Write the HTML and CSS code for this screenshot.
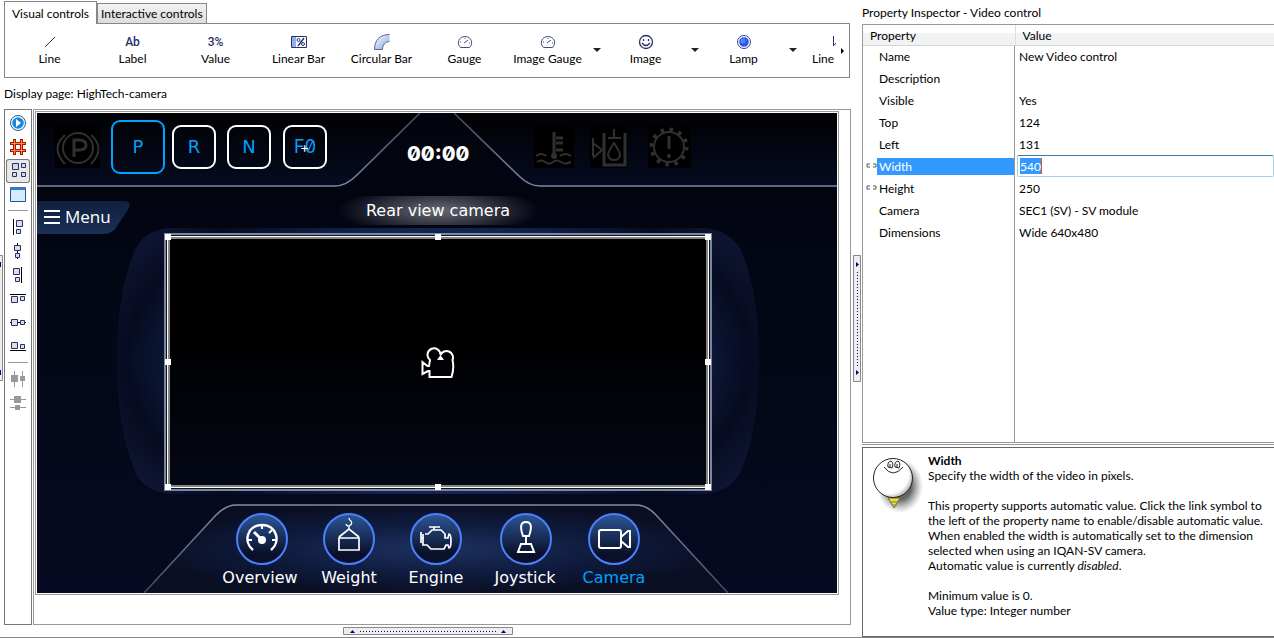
FILE: index.html
```html
<!DOCTYPE html>
<html lang="en">
<head>
<meta charset="utf-8">
<title>Display page editor</title>
<link rel="stylesheet" href="styles.css">
</head>
<body>
<div class="app">
  <main class="editor">
    <div class="tabs" role="tablist">
      <button class="tab tab-active" role="tab" aria-selected="true">Visual controls</button>
      <button class="tab" role="tab" aria-selected="false">Interactive controls</button>
    </div>
    <div class="palette">
      <button class="tool"><svg class="tool-icon" viewBox="0 0 16 16"><path d="M3 13 13 3" stroke="#26306b"/></svg>Line</button>
      <button class="tool"><span class="tool-glyph">Ab</span>Label</button>
      <button class="tool"><span class="tool-glyph">3%</span>Value</button>
      <button class="tool"><svg class="tool-icon" viewBox="0 0 16 16"><path d="M.5 2.500h15v11H.5z" fill="#fff" stroke="#26306b"/><path d="M1 3h4v10H1z" fill="#8fb0e6"/><path d="m7 12 6-8" stroke="#26306b" stroke-width="1.400"/><circle cx="7.500" cy="6" r="1.500" stroke="#26306b" fill="none"/><circle cx="12" cy="10" r="1.500" stroke="#26306b" fill="none"/></svg>Linear Bar</button>
      <button class="tool"><svg class="tool-icon" viewBox="0 0 16 16"><defs><linearGradient id="arc" x2="1" y2="1"><stop stop-color="#fff"/><stop offset="1" stop-color="#7fa5df"/></linearGradient></defs><path d="M.5 15.500C.5 6 6 .5 15.500.5V7C11 8 8.500 11 8.500 15.500z" fill="url(#arc)"/><path d="M.5 15.500C.5 6 6 .5 15.500.5M8.500 15.500C8.500 11 11 8 15.500 7.500M.5 15.500h8" fill="none" stroke="#5b6595"/></svg>Circular Bar</button>
      <button class="tool"><svg class="tool-icon" viewBox="0 0 16 16"><path d="M3.500 13.500C-1 9 2 2.500 8 2.500s9 6.500 4.500 11zM7 9l4-3M3 8h1M8 4v1M12 9h1" fill="none" stroke="#454d7c"/></svg>Gauge</button>
      <button class="tool"><svg class="tool-icon" viewBox="0 0 16 16"><path d="M3.500 13.500C-1 9 2 2.500 8 2.500s9 6.500 4.500 11zM7 9l4-3M3 8h1M8 4v1M12 9h1" fill="none" stroke="#454d7c"/></svg>Image Gauge</button>
      <button class="drop" aria-label="Image gauge options"></button>
      <button class="tool"><svg class="tool-icon" viewBox="0 0 16 16"><circle cx="8" cy="8" r="6.500" fill="none" stroke="#26306b" stroke-width="1.300"/><path d="M5.500 5v2M10.500 5v2M4 9q4 5 8 0" fill="none" stroke="#26306b" stroke-width="1.300"/></svg>Image</button>
      <button class="drop" aria-label="Image options"></button>
      <button class="tool"><svg class="tool-icon" viewBox="0 0 16 16"><circle cx="8" cy="8" r="6.500" fill="#fff" stroke="#3a437b"/><circle cx="8" cy="8" r="4.800" fill="#2f52f5"/><circle cx="7" cy="7" r="2.500" fill="#4b8cf8"/></svg>Lamp</button>
      <button class="drop" aria-label="Lamp options"></button>
      <button class="tool tool-cut"><svg class="tool-icon" viewBox="0 0 16 16"><path d="M1.500 2v10M2 11.500 4 9" fill="none" stroke="#26306b"/></svg>Line</button>
      <button class="scroll-next" aria-label="More controls"></button>
    </div>
    <h1 class="page-name">Display page: HighTech-camera</h1>

    <div class="workspace">
      <svg class="side-handle" viewBox="0 0 3 126" aria-hidden="true"><path d="M-1 .5h3.500v125H-1z" fill="#eee" stroke="#888"/><path d="M0 7h1v5H0zM0 115h1v5H0z" fill="#000080"/></svg>
      <div class="strip" role="toolbar" aria-label="Layout">
        <button class="strip-btn" aria-label="Run"><svg viewBox="0 0 24 24"><circle cx="12" cy="12" r="7.500" fill="#fff" stroke="#175da9"/><circle cx="12" cy="12" r="5.800" fill="#1e86dc"/><path d="m10 8 5 4-5 4z" fill="#fff"/></svg></button>
        <button class="strip-btn" aria-label="Grid"><svg viewBox="0 0 24 24"><path d="M8.500 4v16M15.500 4v16M4 8.500h16M4 15.500h16" stroke="#b01208" stroke-width="3"/><path d="M8.500 5v14M15.500 5v14M5 8.500h14M5 15.500h14" stroke="#ff8f3c"/></svg></button>
        <button class="strip-btn pressed" aria-label="Snap to objects" aria-pressed="true"><svg viewBox="0 0 24 24"><g fill="#d9dae0" stroke="#26306b"><path d="M6.500 4.500h6v6h-6zM15.500 4.500h4v4h-4zM6.500 13.500h4v4h-4zM15.500 13.500h4v4h-4z"/></g></svg></button>
        <button class="strip-btn" aria-label="Page"><svg viewBox="0 0 24 24"><path d="M4.500 5.500h15v13h-15z" fill="#d5ebff" stroke="#2251a5"/><path d="M4 4h16v3H4z" fill="#2d78d6"/><path d="M16 5h2v1h-2z" fill="#f03050"/></svg></button>
        <hr class="strip-sep">
        <button class="strip-btn" aria-label="Align left"><svg viewBox="0 0 24 24"><path d="M7.500 4v16" stroke="#000"/><path d="M10.500 5.500h6v6h-6zM10.500 14.500h4v4h-4z" fill="#dddee3" stroke="#26306b"/></svg></button>
        <button class="strip-btn" aria-label="Align centre"><svg viewBox="0 0 24 24"><path d="M11.500 4v16" stroke="#000"/><path d="M8.500 6.500h6v5h-6zM9.500 14.500h4v4h-4z" fill="#dddee3" stroke="#26306b"/></svg></button>
        <button class="strip-btn" aria-label="Align right"><svg viewBox="0 0 24 24"><path d="M15.500 4v16" stroke="#000"/><path d="M7.500 5.500h6v6h-6zM9.500 14.500h4v4h-4z" fill="#dddee3" stroke="#26306b"/></svg></button>
        <button class="strip-btn" aria-label="Align top"><svg viewBox="0 0 24 24"><path d="M4 7.500h16" stroke="#000"/><path d="M5.500 9.500h6v6h-6zM14.500 9.500h4v4h-4z" fill="#dddee3" stroke="#26306b"/></svg></button>
        <button class="strip-btn" aria-label="Align middle"><svg viewBox="0 0 24 24"><path d="M4 11.500h16" stroke="#000"/><path d="M5.500 8.500h6v6h-6zM14.500 9.500h4v4h-4z" fill="#dddee3" stroke="#26306b"/></svg></button>
        <button class="strip-btn" aria-label="Align bottom"><svg viewBox="0 0 24 24"><path d="M4 15.500h16" stroke="#000"/><path d="M5.500 7.500h6v6h-6zM14.500 9.500h4v4h-4z" fill="#dddee3" stroke="#26306b"/></svg></button>
        <hr class="strip-sep">
        <button class="strip-btn" aria-label="Distribute horizontally" disabled><svg viewBox="0 0 24 24"><path d="M8.500 4v16M16.500 4v16" stroke="#999"/><path d="M5 8h7v7H5zM14 9h5v5h-5z" fill="#999"/></svg></button>
        <button class="strip-btn" aria-label="Distribute vertically" disabled><svg viewBox="0 0 24 24"><path d="M4 8.500h16M4 16.500h16" stroke="#999"/><path d="M8 5h7v7H8zM9 14h5v5H9z" fill="#999"/></svg></button>
      </div>

      <div class="viewport">
        <div class="display">
          <svg class="backdrop" viewBox="0 0 800 480" aria-hidden="true">
            <defs>
              <linearGradient id="base" x2="0" y2="1"><stop stop-color="#02040d"/><stop offset=".5" stop-color="#030817"/><stop offset="1" stop-color="#060a22"/></linearGradient>
              <linearGradient id="bar" x2="0" y2="1"><stop stop-color="#010103"/><stop offset="1" stop-color="#050b20"/></linearGradient>
              <linearGradient id="edge" x2="0" y2="1"><stop stop-color="#44465a"/><stop offset="1" stop-color="#80869f"/></linearGradient>
              <linearGradient id="edge2" x2="0" y2="1"><stop stop-color="#858ba2"/><stop offset="1" stop-color="#444a5e"/></linearGradient>
              <radialGradient id="barrel" gradientUnits="userSpaceOnUse" cx="0" cy="0" r="1" gradientTransform="translate(401 248) scale(380 220)"><stop offset=".6" stop-color="#122550"/><stop offset=".72" stop-color="#0b1635"/><stop offset=".82" stop-color="#060b20"/><stop offset=".86" stop-color="#0a0f27"/><stop offset="1" stop-color="#121837"/></radialGradient>
              <radialGradient id="dock" cx=".5" cy=".5" r=".5"><stop stop-color="#1d315f"/><stop offset=".6" stop-color="#0e1a3c"/><stop offset="1" stop-color="#0b0f24"/></radialGradient>
              <linearGradient id="menu" x2="0" y2="1"><stop stop-color="#10203f"/><stop offset="1" stop-color="#1b3056"/></linearGradient>
              <linearGradient id="disc" x2="0" y2="1"><stop stop-color="#2d5798"/><stop offset=".8" stop-color="#0a1029"/></linearGradient>
            </defs>
            <path fill="url(#base)" d="M0 0h800v480H0z"/>
            <path fill="url(#bar)" d="M0 0h383L320 62Q309 73 298 73H0zM417 0l65 63q10 10 21 10h297V0z"/>
            <path fill="none" stroke="url(#edge)" stroke-width="1.600" d="M0 73h298q11 0 22-11L383 0M417 0l65 63q10 10 21 10h297"/>
            <path fill="url(#menu)" d="M0 88h87q8 0 5 7L80 113q-4 8-14 8H0z"/>
            <path fill="url(#barrel)" d="M132 115H668Q692 117 704 137Q722 180 722 247T704 358Q694 378 668 381H132Q106 378 98 358Q80 316 80 247T98 137Q108 117 132 115z"/>
            <path fill="url(#dock)" d="M107 480l72-78q10-10 20-10h400q11 0 20 10l72 78z"/>
            <path fill="none" stroke="url(#edge2)" stroke-width="1.500" d="M107 480l72-78q10-10 20-10h400q11 0 20 10l72 78"/>
            <path fill="#000" d="M18 13h45v42H18zM497 13h40v42h-40zM553 13h37v42h-37zM611 13h43v42h-43z"/>
            <g fill="none" stroke="#303030" stroke-width="2">
              <circle cx="41" cy="35" r="15"/><path d="M37 44V27h5q7 0 7 5t-7 5h-5" stroke-width="3"/><path d="M28 22q-15 13 0 29M54 22q15 13 0 29"/>
              <path d="M517 19v22M519 25h7M519 30h7M519 37h7" stroke-width="3"/><circle cx="517" cy="43" r="3" fill="#303030" stroke="none"/><path d="M499 43q5-4 10 0M523 43q5-4 11 0M500 49q4-3 8 0t8 0 8 0 10 0"/>
              <path d="M567 20v32h21V20" stroke-width="3"/><path d="M577 16v8M571 25h13"/><path d="M577 30q-6 9-6 12 1 5 6 5t6-5q0-3-6-12zM556 25v18M556 30l9 7-9 8"/>
              <circle cx="632" cy="34" r="15"/><circle cx="632" cy="34" r="17.500" stroke-width="4" stroke-dasharray="3.500 5.663"/><path d="M632 23v13" stroke-width="3"/><circle cx="632" cy="43" r="2" fill="#303030" stroke="none"/>
            </g>
            <path d="M7 98h16M7 104h16M7 110h16" stroke="#fff" stroke-width="2"/>
            <g fill="url(#disc)" stroke="#4b80ff" stroke-width="2"><circle cx="225" cy="426" r="25"/><circle cx="312" cy="426" r="25"/><circle cx="399" cy="426" r="25"/><circle cx="489" cy="426" r="25"/><circle cx="577" cy="426" r="25"/></g>
            <g fill="none" stroke="#fff" stroke-width="2">
              <path d="M216 437C206 429 210 412 225 412s19 17 9 25" stroke-width="2.500"/><path d="M217 419l8 8" stroke-width="3"/><circle cx="225" cy="427" r="4" fill="#fff" stroke="none"/><path d="M211 427h4M235 427h4M225 412v4M235 417l-3 3"/>
              <path d="M302 425h20v12h-20zM302 424l10-8 10 8" stroke-width="1.700"/><path d="M312 416v-3q4-2 2-5-2-1-2-3M309 411q1 3 4 2" stroke-width="1.300"/>
              <path d="M388 421h3l4-4h9l4 4v4h3l1-4q2 0 2 7t-2 7l-1-3h-2l-2 4h-13l-4-4h-4v-11M384 419v11M384 425h3M392 414h11M397 414v3" stroke-width="1.700"/>
              <path d="M486 423q-5-14 3-14t3 14zM489 423v9M484 431h10l3 8h-16z"/>
              <rect x="562" y="417" width="22" height="18" rx="2"/><path d="M584 424l7-6h2v16h-2l-7-6"/>
            </g>
          </svg>
          <span class="gear gear-p">P</span>
          <span class="gear gear-r">R</span>
          <span class="gear gear-n">N</span>
          <span class="gear gear-f">F0<i class="plus">+</i></span>
          <span class="clock">00:00</span>
          <span class="menu-label">Menu</span>
          <span class="title">Rear view camera</span>
          <div class="video">
            <svg class="video-icon" viewBox="0 0 34 34"><path d="M8 20H6.500L1.500 16v12L7 25h1.500v6h22q3-9 1-17A6.500 6.500 0 1 0 19.500 9A6.500 6.500 0 1 0 9 14z" fill="none" stroke="#fff" stroke-width="2"/><path d="M16 14h7l-3.500-5z" fill="#fff"/></svg>
            <i class="grip n w"></i><i class="grip n c"></i><i class="grip n e"></i>
            <i class="grip m w"></i><i class="grip m e"></i>
            <i class="grip s w"></i><i class="grip s c"></i><i class="grip s e"></i>
          </div>
          <span class="nav nav-overview">Overview</span>
          <span class="nav nav-weight">Weight</span>
          <span class="nav nav-engine">Engine</span>
          <span class="nav nav-joystick">Joystick</span>
          <span class="nav nav-camera">Camera</span>
        </div>
      </div>
    </div>
    <div class="splitter-h"><svg class="handle-h" viewBox="0 0 170 8"><path d="M.5.5h169v7H.5z" fill="#eee" stroke="#888"/><path d="M7 6l2.500-3L12 6zM158 6l2.500-3L163 6z" fill="#000080"/><path d="M17 4.500h137" stroke="#000080" stroke-dasharray="1 2"/></svg></div>
  </main>

  <div class="splitter-v"><svg class="handle-v" viewBox="0 0 8 127"><path d="M.5.5h7v126h-7z" fill="#eee" stroke="#888"/><path d="M3 7l3 2.500L3 12zM3 115l3 2.500L3 120z" fill="#000080"/><path d="M4.500 17v95" stroke="#000080" stroke-dasharray="1 2"/></svg></div>

  <aside class="inspector">
    <h2 class="inspector-title">Property Inspector - Video control</h2>
    <div class="grid-pane">
      <table class="props">
        <thead><tr><th class="col-name" scope="col">Property</th><th scope="col">Value</th></tr></thead>
        <tbody>
          <tr><td><span class="prop">Name</span></td><td>New Video control</td></tr>
          <tr><td><span class="prop">Description</span></td><td></td></tr>
          <tr><td><span class="prop">Visible</span></td><td>Yes</td></tr>
          <tr><td><span class="prop">Top</span></td><td>124</td></tr>
          <tr><td><span class="prop">Left</span></td><td>131</td></tr>
          <tr><td class="linked"><svg class="link" viewBox="0 0 11 6"><path d="M4 1H1v3h3M7 1h3v3H7" fill="none" stroke="#555"/></svg><label class="prop prop-on" for="width">Width</label></td><td class="edit"><div class="field"><input id="width" class="field-input" value="540"></div></td></tr>
          <tr><td class="linked"><svg class="link" viewBox="0 0 11 6"><path d="M4 1H1v3h3M7 1h3v3H7" fill="none" stroke="#555"/></svg><span class="prop">Height</span></td><td>250</td></tr>
          <tr><td><span class="prop">Camera</span></td><td>SEC1 (SV) - SV module</td></tr>
          <tr><td><span class="prop">Dimensions</span></td><td>Wide 640x480</td></tr>
        </tbody>
      </table>
    </div>
    <div class="help-area">
      <div class="help">
        <svg class="mascot" viewBox="0 0 50 60"><defs><radialGradient id="shade"><stop offset=".5" stop-color="#555" stop-opacity=".9"/><stop offset="1" stop-color="#888" stop-opacity="0"/></radialGradient><radialGradient id="ball" cx=".4" cy=".4" r=".62"><stop offset=".8" stop-color="#fff"/><stop offset="1" stop-color="#bbb"/></radialGradient></defs><ellipse cx="27" cy="29" rx="23" ry="27" fill="url(#shade)"/><path d="M15 41h12l-6 10z" fill="#e9df28" stroke="#776e20"/><path d="M17 45h9M19 48h5" stroke="#7777aa"/><circle cx="20" cy="21" r="19.500" fill="url(#ball)" stroke="#222"/><path d="M11 10q9 12 19 0M15 10q-1-5 3-6 3 2 1 7zM22 10q-1-5 3-6 3 2 1 7zM17 7v3M24 7v3" fill="none" stroke="#222"/></svg>
        <div class="help-text">
          <h3 class="help-title">Width</h3>
          <p>Specify the width of the video in pixels.</p>
          <p class="gap">This property supports automatic value. Click the link symbol to the left of the property name to enable/disable automatic value. When enabled the width is automatically set to the dimension selected when using an IQAN-SV camera.</p>
          <p>Automatic value is currently <em>disabled</em>.</p>
          <p class="gap">Minimum value is 0.</p>
          <p>Value type: Integer number</p>
        </div>
      </div>
    </div>
  </aside>
</div>
</body>
</html>
```
FILE: styles.css
```css
* { box-sizing: border-box; }
body {
  margin: 0;
  background: #fff;
  color: #000;
  font: 12px/15px Lato, "Open Sans", sans-serif;
}
h1, h2, h3, p { margin: 0; font-size: inherit; font-weight: normal; }
button { font: inherit; color: inherit; background: none; border: 0; padding: 0; }

.app {
  display: grid;
  grid-template-columns: minmax(0, 1fr) 11px 412px;
  height: 100vh;
  border-bottom: 1px solid #888;
}
.editor { display: flex; flex-direction: column; min-height: 0; }

/* control palette */
.tabs { display: flex; align-items: flex-end; padding: 1px 0 0 4px; height: 23px; }
.tab {
  height: 20px;
  padding: 0 3px;
  border: 1px solid #85858d;
  border-bottom: 0;
  background: linear-gradient(#f2f2f2, #dcdcdc);
  white-space: nowrap;
}
.tab-active {
  height: 23px;
  margin-bottom: -1px;
  padding: 0 7px;
  background: #fff;
  position: relative;
  z-index: 1;
}
.palette {
  display: flex;
  height: 55px;
  margin: 0 1px 0 4px;
  padding: 0 3px;
  border: 1px solid #85858d;
}
.tool {
  display: flex;
  flex-direction: column;
  align-items: center;
  flex: 0 0 83px;
  padding-top: 10px;
  white-space: nowrap;
}
.tool-icon { display: block; width: 16px; height: 16px; margin-bottom: 1px; }
.tool-glyph { height: 17px; line-height: 16px; font-family: Roboto, sans-serif; font-weight: 500; color: #26306b; }
.drop { flex: 0 0 15px; position: relative; }
.drop::after {
  content: "";
  position: absolute;
  top: 24px;
  left: 4px;
  border: 4px solid transparent;
  border-top-color: #222;
}
.tool-cut { flex: 0 0 24px; margin-left: 12px; overflow: hidden; align-items: flex-start; }
.tool-cut .tool-icon { margin-left: 20px; }
.scroll-next { margin-left: auto; width: 8px; position: relative; }
.scroll-next::after {
  content: "";
  position: absolute;
  top: 24px;
  left: 3px;
  border: 3px solid transparent;
  border-left-color: #000;
}
.page-name { padding: 8px 4px; }

/* workspace */
.workspace { display: flex; flex: 1; min-height: 0; }
.side-handle {
  flex: none;
  width: 3px;
  height: 126px;
  margin: 146px 1px 0 0;
}
.strip {
  width: 28px;
  flex: none;
  padding: 1px;
  border: 1px solid #777;
}
.strip-btn { display: block; width: 24px; height: 24px; }
.strip-btn svg { display: block; width: 24px; height: 24px; }
.pressed { border-radius: 3px; background: #e8e8e8; box-shadow: inset 0 0 0 1px #777; }
.strip-sep { height: 1px; margin: 3px 2px 4px; border: 0; background: #999; }
.viewport {
  flex: 1;
  min-width: 0;
  margin-left: 1px;
  padding: 1px;
  border: 1px solid #999;
  overflow: hidden;
}

/* 800 x 480 device page: controls sit at their own page coordinates */
.display {
  position: relative;
  width: 804px;
  height: 484px;
  border: 1px solid #999;
  padding: 1px;
  color: #fff;
  font: 16px/20px "DejaVu Sans", sans-serif;
}
.backdrop { display: block; width: 800px; height: 480px; }
.gear {
  position: absolute;
  top: 13px;
  width: 44px;
  height: 44px;
  display: flex;
  align-items: center;
  justify-content: center;
  border: 2px solid #fff;
  border-radius: 9px;
  color: #00a2ff;
  font-size: 18px;
  font-feature-settings: "zero";
}
.gear-p { left: 75px; top: 8px; width: 54px; height: 54px; border-color: #00a2ff; }
.gear-r { left: 136px; }
.gear-n { left: 191px; }
.gear-f { left: 247px; font-family: Inter, sans-serif; }
.plus { position: absolute; left: 15px; color: #fff; font-size: 14px; font-style: normal; }
.clock {
  position: absolute;
  left: 371px;
  top: 32px;
  font: 800 20px/20px Inter, sans-serif;
  font-feature-settings: "zero";
}
.menu-label { position: absolute; left: 29px; top: 95px; font: 17px/20px "Open Sans", sans-serif; }
.title {
  position: absolute;
  left: 302px;
  top: 84px;
  width: 200px;
  height: 29px;
  line-height: 30px;
  text-align: center;
  background: radial-gradient(ellipse 50% 90%, #686a72, #2c2e3b 60%, transparent);
}
.video {
  position: absolute;
  left: 132px;
  top: 125px;
  width: 540px;
  height: 250px;
  background: linear-gradient(#000, #000 40%, #040816);
  box-shadow: inset 0 0 0 2px #858585, 0 0 0 1px #fff, 0 0 0 2px #111, 0 0 0 4px #7b85a5;
}
.video-icon { position: absolute; left: 253px; top: 109px; width: 34px; height: 34px; }
.grip { position: absolute; width: 6px; height: 6px; background: #fff; }
.grip.n { top: -3px; }
.grip.m { top: 122px; }
.grip.s { bottom: -3px; }
.grip.w { left: -3px; }
.grip.c { left: 267px; }
.grip.e { right: -3px; }
.nav { position: absolute; top: 456px; width: 90px; text-align: center; }
.nav-overview { left: 179px; }
.nav-weight { left: 268px; }
.nav-engine { left: 355px; }
.nav-joystick { left: 444px; }
.nav-camera { left: 533px; color: #00a2ff; }

/* splitters */
.splitter-h { flex: none; height: 12px; padding: 2px 0 0 4px; }
.handle-h { display: block; width: 170px; height: 8px; margin: 0 auto; }
.splitter-v { padding: 255px 0 0 2px; }
.handle-v { display: block; width: 8px; height: 127px; }

/* property inspector */
.inspector { display: flex; flex-direction: column; min-height: 0; }
.inspector-title { padding: 5px 0 4px; }
.grid-pane {
  flex: 1;
  min-height: 0;
  border: 1px solid #999;
  border-right: 0;
  background: linear-gradient(#999, #999) 151px 20px / 1px 100% no-repeat;
}
.props { width: 100%; border-collapse: collapse; table-layout: fixed; }
.props th {
  height: 20px;
  padding: 2px 7px 0;
  text-align: left;
  font-weight: normal;
  background: linear-gradient(#fff 40%, #f1f2f4 40%);
  border-bottom: 1px solid #d5d5d5;
}
.col-name { width: 152px; border-right: 1px solid #ddd; }
.props td { height: 22px; padding: 0 0 0 4px; white-space: nowrap; }
.props td:first-child { padding: 0 1px 0 14px; }
.props td.linked { display: flex; align-items: center; padding-left: 3px; }
.link { width: 11px; height: 6px; flex: none; }
.prop { display: block; flex: 1; padding-left: 2px; line-height: 17px; }
.prop-on { background: #3399ff; color: #fff; }
.props td.edit { padding: 0 0 0 2px; }
.field {
  display: flex;
  height: 22px;
  align-items: center;
  padding: 0 2px;
  border: 1px solid #a9cfe8;
  border-top-color: #3d7bad;
  border-radius: 2px;
}
.field-input {
  width: 22px;
  height: 16px;
  padding: 0;
  border: 0;
  border-right: 1px solid #c86414;
  outline: 0;
  background: #3399ff;
  color: #fff;
  font: inherit;
}
.help-area {
  flex: none;
  margin-top: 1px;
  padding-top: 2px;
  border-top: 1px solid #999;
}
.help {
  display: flex;
  min-height: 190px;
  border: 1px solid #666;
  border-right: 0;
}
.mascot { flex: none; width: 50px; height: 60px; margin: 9px 5px 0 10px; }
.help-text { flex: 1; min-width: 0; padding: 5px 4px 0 0; }
.help-title { font-weight: bold; }
.gap { margin-top: 15px; }
```
